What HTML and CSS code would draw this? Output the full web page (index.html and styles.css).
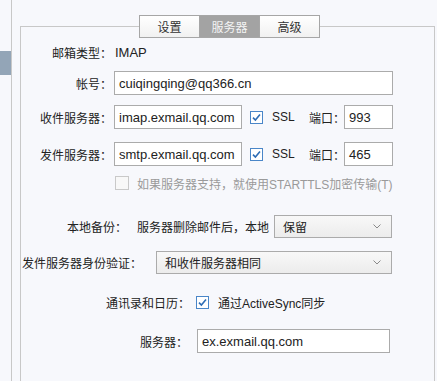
FILE: index.html
```html
<!DOCTYPE html>
<html lang="zh-CN">
<head>
<meta charset="utf-8">
<link rel="stylesheet" href="styles.css">
</head>
<body>
<div class="sidebar"><div class="sidebar-sel"></div></div>
<div class="main">
  <div class="panel">
    <div class="tabs">
      <div class="tab">设置</div>
      <div class="tab active">服务器</div>
      <div class="tab">高级</div>
    </div>

    <div class="row r-a">
      <span class="lbl lbl-main">邮箱类型：</span>
      <span class="value">IMAP</span>
    </div>

    <div class="row r-b">
      <span class="lbl lbl-main">帐号：</span>
      <span class="field w-account">cuiqingqing@qq366.cn</span>
    </div>

    <div class="row r-c">
      <span class="lbl lbl-main">收件服务器：</span>
      <span class="field w-server">imap.exmail.qq.com</span>
      <span class="check checked ssl-check"><svg viewBox="0 0 13 13" width="13" height="13"><path d="M3 6.6 L5.4 9 L10 3.6" fill="none" stroke="#2d6cb5" stroke-width="1.6"/></svg></span>
      <span class="ssl">SSL</span>
      <span class="port-lbl">端口：</span>
      <span class="field w-port">993</span>
    </div>

    <div class="row r-d">
      <span class="lbl lbl-main">发件服务器：</span>
      <span class="field w-server">smtp.exmail.qq.com</span>
      <span class="check checked ssl-check"><svg viewBox="0 0 13 13" width="13" height="13"><path d="M3 6.6 L5.4 9 L10 3.6" fill="none" stroke="#2d6cb5" stroke-width="1.6"/></svg></span>
      <span class="ssl">SSL</span>
      <span class="port-lbl">端口：</span>
      <span class="field w-port">465</span>
    </div>

    <div class="row r-e">
      <span class="check disabled tls-check"></span>
      <span class="muted">如果服务器支持，就使用STARTTLS加密传输(T)</span>
    </div>

    <div class="row r-f">
      <span class="lbl lbl-backup">本地备份：</span>
      <span class="value backup-text">服务器删除邮件后，本地</span>
      <span class="select w-keep">保留<svg class="chev" viewBox="0 0 8 5" width="8" height="5"><path d="M0.5 0.5 L4 4 L7.5 0.5" fill="none" stroke="#8a8a8a" stroke-width="1"/></svg></span>
    </div>

    <div class="row r-g">
      <span class="lbl lbl-auth">发件服务器身份验证：</span>
      <span class="select w-auth">和收件服务器相同<svg class="chev" viewBox="0 0 8 5" width="8" height="5"><path d="M0.5 0.5 L4 4 L7.5 0.5" fill="none" stroke="#8a8a8a" stroke-width="1"/></svg></span>
    </div>

    <div class="row r-h">
      <span class="lbl lbl-sync">通讯录和日历：</span>
      <span class="check checked sync-check"><svg viewBox="0 0 13 13" width="13" height="13"><path d="M3 6.6 L5.4 9 L10 3.6" fill="none" stroke="#2d6cb5" stroke-width="1.6"/></svg></span>
      <span class="value sync-text">通过ActiveSync同步</span>
    </div>

    <div class="row r-i">
      <span class="lbl lbl-ex">服务器：</span>
      <span class="field w-ex">ex.exmail.qq.com</span>
    </div>
  </div>
</div>
</body>
</html>
```

FILE: styles.css
```css
* { box-sizing: border-box; }

html, body {
  margin: 0;
  padding: 0;
}

body {
  width: 437px;
  height: 381px;
  overflow: hidden;
  background: #f7f8fc;
  display: flex;
  font-family: "Liberation Sans", "Noto Sans CJK SC", sans-serif;
  font-size: 12px;
  color: #222;
}

.sidebar {
  width: 12px;
  height: 100%;
  border-right: 1px solid #c8c8c8;
  flex: none;
}

.sidebar-sel {
  margin-top: 51px;
  width: 11px;
  height: 24px;
  background: #93a5b7;
}

.main {
  padding-left: 8px;
  flex: none;
}

.panel {
  margin-top: 26px;
  width: 415px;
  height: 355px;
  border: 1px solid #c8c8c8;
  border-bottom: none;
  display: flex;
  flex-direction: column;
}

.tabs {
  display: flex;
  margin-top: -12px;
  margin-left: 118px;
  height: 23px;
  flex: none;
}

.tab {
  width: 61px;
  height: 23px;
  border: 1px solid #a6a6a6;
  background: linear-gradient(#ffffff, #f1f1f1);
  color: #333;
  font-size: 12px;
  display: flex;
  align-items: center;
  justify-content: center;
}

.tab + .tab { margin-left: -1px; }

.tab.active {
  background: #a3a3a3;
  color: #f4f4f4;
}

.row {
  display: flex;
  align-items: center;
  height: 24px;
  flex: none;
}

.r-a { margin-top: 2px; }
.r-b { margin-top: 7px; }
.r-c { margin-top: 10px; }
.r-d { margin-top: 13px; }
.r-e { margin-top: 5px; }
.r-f { margin-top: 20px; height: 23px; }
.r-g { margin-top: 13px; height: 23px; }
.r-h { margin-top: 16px; }
.r-i { margin-top: 15px; }

.lbl {
  text-align: right;
  flex: none;
  white-space: nowrap;
  color: #222;
}

.lbl-main { width: 91px; margin-right: 2px; }
.lbl-backup { width: 106px; }
.lbl-auth { width: 121px; }
.lbl-sync { width: 169px; }
.lbl-ex { width: 167px; }

.value {
  white-space: nowrap;
}

.r-a .value { margin-left: 1px; font-size: 13px; }

.field {
  height: 24px;
  border: 1px solid #ababab;
  background: #fff;
  padding-left: 4px;
  font-size: 13px;
  color: #222;
  display: flex;
  align-items: center;
  white-space: nowrap;
  overflow: hidden;
  flex: none;
}

.w-account { width: 279px; }
.w-server { width: 128px; }
.w-port { width: 49px; }
.w-ex { width: 193px; margin-left: 9px; }

.check {
  width: 13px;
  height: 13px;
  flex: none;
  display: block;
}

.check svg { display: block; }

.check.checked {
  border: 1px solid #4a86c8;
  background: #fff;
}

.check.checked svg { margin: -1px 0 0 -1px; }

.check.disabled {
  width: 14px;
  height: 14px;
  border: 1px solid #c9c9c9;
  background: #f8f8f8;
}

.ssl-check { margin-left: 8px; }

.ssl {
  margin-left: 9px;
  width: 24px;
  flex: none;
  font-size: 12px;
}

.port-lbl {
  margin-left: 13px;
  width: 35px;
  flex: none;
  white-space: nowrap;
}

.tls-check { margin-left: 94px; }

.muted {
  margin-left: 8px;
  color: #9a9a9a;
  white-space: nowrap;
}

.backup-text { margin-left: 10px; width: 137px; }

.select {
  height: 23px;
  border: 1px solid #ababab;
  background: linear-gradient(#f8f8f8, #ececec);
  padding-left: 8px;
  display: flex;
  align-items: center;
  position: relative;
  font-size: 12px;
  color: #222;
  flex: none;
}

.chev {
  position: absolute;
  right: 10px;
  top: 8px;
}

.w-keep { width: 118px; }
.w-auth { width: 236px; margin-left: 14px; }

.sync-check { margin-left: 6px; }
.sync-text { margin-left: 9px; }
```
